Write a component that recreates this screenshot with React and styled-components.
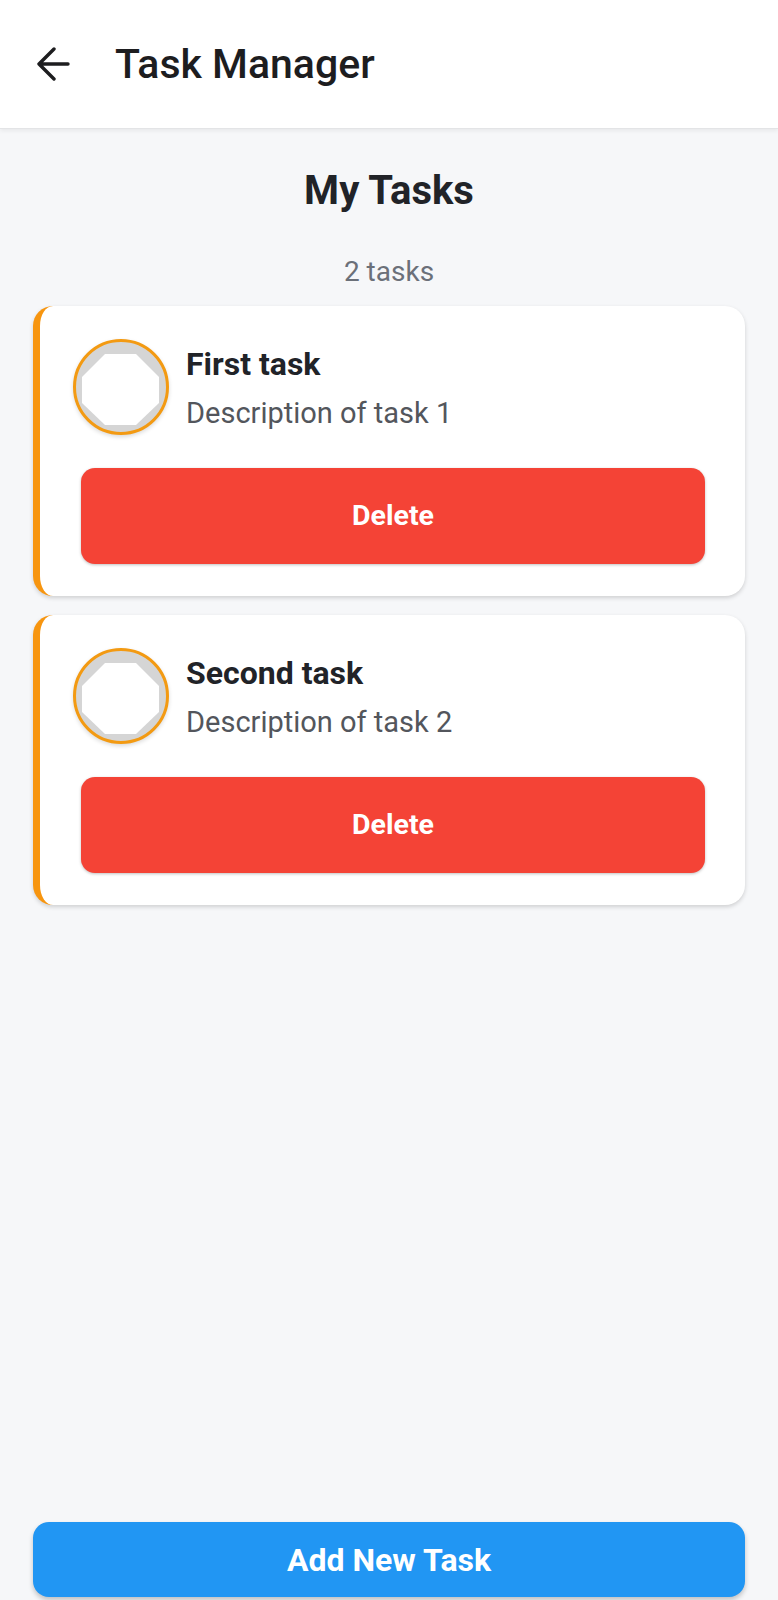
import React, { useState } from "react";
import styled, { createGlobalStyle } from "styled-components";

const GlobalStyle = createGlobalStyle`
  body {
    margin: 0;
    background: #f6f7f9;
    font-family: Roboto, "Noto Sans", "Liberation Sans", sans-serif;
  }
`;

const initialTasks = [
  { id: 1, title: "First task", desc: "Description of task 1" },
  { id: 2, title: "Second task", desc: "Description of task 2" },
];

const BackArrow = () => (
  <svg width="34" height="34" viewBox="0 0 34 34" fill="none">
    <path
      d="M32 17H3M18 2L3 17l15 15"
      stroke="#1d1d1f"
      strokeWidth="3.4"
      strokeLinecap="round"
      strokeLinejoin="round"
    />
  </svg>
);

const App = () => {
  const [tasks, setTasks] = useState(initialTasks);

  const onDelete = (id) => {
    setTasks(tasks.filter((t) => t.id !== id));
  };

  return (
    <StPage>
      <GlobalStyle />
      <StHeader>
        <StBack>
          <BackArrow />
        </StBack>
        <StHeaderTitle>Task Manager</StHeaderTitle>
      </StHeader>
      <StMain>
        <StHeading>My Tasks</StHeading>
        <StCount>{tasks.length} tasks</StCount>
        <StList>
          {tasks.map((task) => (
            <StCard key={task.id}>
              <StRow>
                <StCheck>
                  <svg width="90" height="90" viewBox="0 0 90 90">
                    <polygon
                      points="29,12 60,12 83,35 83,61 60,83 29,83 6,61 6,35"
                      fill="#fff"
                    />
                  </svg>
                </StCheck>
                <StInfo>
                  <StTaskTitle>{task.title}</StTaskTitle>
                  <StTaskDesc>{task.desc}</StTaskDesc>
                </StInfo>
              </StRow>
              <StDeleteButton onClick={() => onDelete(task.id)}>
                Delete
              </StDeleteButton>
            </StCard>
          ))}
        </StList>
      </StMain>
      <StFooter>
        <StAddButton>Add New Task</StAddButton>
      </StFooter>
    </StPage>
  );
};

export default App;

const StPage = styled.div`
  min-height: 100vh;
  display: flex;
  flex-direction: column;
`;

const StHeader = styled.header`
  height: 128px;
  background: #fff;
  border-bottom: 1px solid #e3e4e6;
  box-shadow: 0 2px 4px rgba(0, 0, 0, 0.06);
  display: flex;
  align-items: center;
  padding-left: 36px;
  box-sizing: content-box;
`;

const StBack = styled.div`
  display: flex;
  width: 34px;
  height: 34px;
  margin-right: 45px;
`;

const StHeaderTitle = styled.h1`
  margin: 0;
  font-size: 41px;
  font-weight: 500;
  color: #1d1d1f;
`;

const StMain = styled.main`
  flex: 1;
  padding: 0 33px;
  display: flex;
  flex-direction: column;
`;

const StHeading = styled.h2`
  margin: 38px 0 0;
  text-align: center;
  font-size: 40px;
  line-height: 1.2;
  font-weight: 700;
  color: #212328;
`;

const StCount = styled.div`
  margin-top: 40px;
  text-align: center;
  font-size: 28px;
  line-height: 1.2;
  color: #6b7079;
`;

const StList = styled.div`
  margin-top: 17px;
  display: flex;
  flex-direction: column;
  gap: 19px;
`;

const StCard = styled.div`
  background: #fff;
  border-left: 7px solid #f7950f;
  border-radius: 20px;
  padding: 33px 32px 32px 33px;
  box-shadow: 0 2px 4px rgba(0, 0, 0, 0.16);
  display: flex;
  flex-direction: column;
  gap: 33px;
`;

const StRow = styled.div`
  display: flex;
  align-items: flex-start;
  gap: 17px;
`;

const StCheck = styled.div`
  width: 90px;
  height: 90px;
  flex-shrink: 0;
  border: 3.5px solid #f39a12;
  border-radius: 50%;
  background: #d5d5d5;
  box-shadow: 0 2px 4px rgba(0, 0, 0, 0.15);
  display: flex;

  svg {
    display: block;
  }
`;

const StInfo = styled.div`
  padding-top: 6px;
  display: flex;
  flex-direction: column;
  gap: 13px;
`;

const StTaskTitle = styled.div`
  font-size: 32px;
  line-height: 1.2;
  font-weight: 700;
  color: #212328;
`;

const StTaskDesc = styled.div`
  font-size: 29px;
  line-height: 1.2;
  color: #53565c;
`;

const StDeleteButton = styled.button`
  margin: 0 8px;
  height: 96px;
  border: none;
  border-radius: 14px;
  background: #f44336;
  color: #fff;
  font-family: inherit;
  font-size: 28.5px;
  font-weight: 700;
  box-shadow: 0 1px 3px rgba(0, 0, 0, 0.25);
  cursor: pointer;
`;

const StFooter = styled.div`
  padding: 0 33px 3px;
`;

const StAddButton = styled.button`
  width: 100%;
  height: 75px;
  border: none;
  border-radius: 16px;
  background: #2196f3;
  color: #fff;
  font-family: inherit;
  font-size: 32px;
  font-weight: 700;
  box-shadow: 0 3px 5px rgba(0, 0, 0, 0.22);
  cursor: pointer;
`;
